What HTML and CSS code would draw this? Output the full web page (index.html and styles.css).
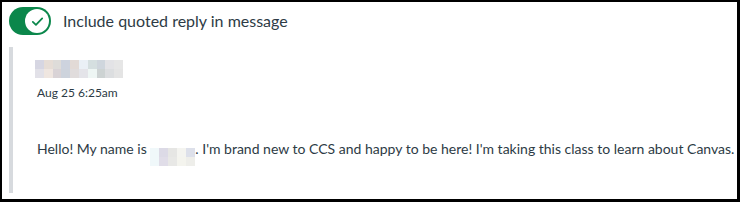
FILE: index.html
```html
<!DOCTYPE html>
<html lang="en">
<head>
<meta charset="utf-8">
<title>Include quoted reply</title>
<link rel="stylesheet" href="styles.css">
</head>
<body>
<div class="frame">
  <label class="toggle-row">
    <span class="toggle" role="switch" aria-checked="true">
      <span class="knob">
        <svg viewBox="0 0 24 24" width="15" height="15" aria-hidden="true"><path d="M4.5 12.5 L9.5 17.5 L19.5 7" fill="none" stroke="#0b874b" stroke-width="2.8" stroke-linecap="round" stroke-linejoin="round"/></svg>
      </span>
    </span>
    <span class="toggle-label">Include quoted reply in message</span>
  </label>
  <div class="quote">
    <div class="author" aria-label="redacted name">
      <span style="background:#d6d6e2"></span><span style="background:#e6ddd6"></span><span style="background:#dedcd9"></span><span style="background:#cdd3de"></span><span style="background:#e2dad6"></span><span style="background:#eaf0f6"></span><span style="background:#d5dfe0"></span><span style="background:#cfd6dd"></span><span style="background:#e3e3e6"></span><span style="background:#e6e6e6"></span>
      <span style="background:#e2e1e8"></span><span style="background:#efe6e0"></span><span style="background:#d9d3d6"></span><span style="background:#cdd3dc"></span><span style="background:#e0dcdc"></span><span style="background:#e4e4e9"></span><span style="background:#eef6f4"></span><span style="background:#cdd3d3"></span><span style="background:#dcdee0"></span><span style="background:#e4e4e4"></span>
    </div>
    <div class="date">Aug 25 6:25am</div>
    <p class="message">Hello! My name is <span class="redact"><span style="background:#f0f8fa"></span><span style="background:#dcdae6"></span><span style="background:#e6e6e4"></span><span style="background:#f4f4f0"></span><span style="background:#dde0ea"></span><span style="background:#f0f8fa"></span><span style="background:#e0dde8"></span><span style="background:#e8e8e6"></span><span style="background:#f4f4ee"></span><span style="background:#eeeeea"></span></span>. I'm brand new to CCS and happy to be here! I'm taking this class to learn about Canvas.</p>
  </div>
</div>
</body>
</html>
```

FILE: styles.css
```css
html, body {
  margin: 0;
  padding: 0;
  background: #fff;
}
body {
  font-family: Lato, "Liberation Sans", sans-serif;
  color: #2d3b45;
}
.frame {
  box-sizing: border-box;
  width: 740px;
  height: 202px;
  border-style: solid;
  border-color: #000;
  border-width: 2px 3px 3px 2px;
  padding: 5px 0 0 7px;
}
.toggle-row {
  display: flex;
  align-items: center;
  gap: 12px;
  height: 28px;
}
.toggle {
  box-sizing: border-box;
  width: 42px;
  height: 28px;
  border-radius: 14px;
  background: #0b874b;
  display: flex;
  align-items: center;
  justify-content: flex-end;
  padding: 2px;
}
.knob {
  width: 24px;
  height: 24px;
  border-radius: 50%;
  background: #fff;
  display: flex;
  align-items: center;
  justify-content: center;
}
.toggle-label {
  font-size: 16px;
  line-height: 20px;
}
.quote {
  margin-top: 12px;
  height: 146px;
  border-left: 4px solid #d7dade;
  padding: 13px 0 0 24px;
  box-sizing: border-box;
}
.author {
  display: grid;
  grid-template-columns: repeat(10, 8.8px);
  grid-auto-rows: 9px;
  width: 88px;
  margin-left: -2px;
}
.date {
  margin-top: 7px;
  font-size: 12px;
  line-height: 16px;
}
.message {
  margin: 38px 0 0;
  font-size: 14px;
  line-height: 20px;
  white-space: nowrap;
}
.redact {
  display: inline-grid;
  grid-template-columns: repeat(5, 9px);
  grid-auto-rows: 9px;
  vertical-align: -3px;
}
```
